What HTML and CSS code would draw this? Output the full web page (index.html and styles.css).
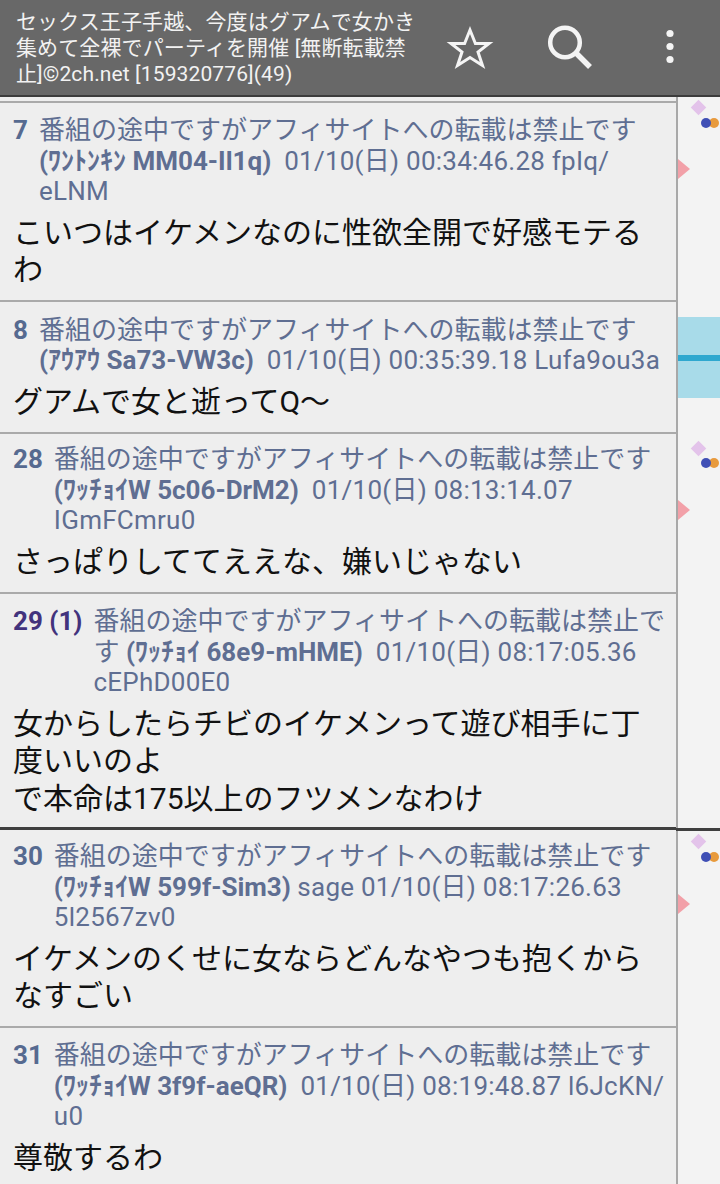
FILE: index.html
```html
<!DOCTYPE html>
<html lang="ja">
<head>
  <meta charset="UTF-8" />
  <meta name="viewport" content="width=device-width, initial-scale=1.0"/>
  <title>スレッド</title>
  <link rel="stylesheet" href="styles.css">
</head>
<body>

<header class="appbar">
  <div class="title">セックス王子手越、今度はグアムで女かき集めて全裸でパーティを開催 [無断転載禁止]©2ch.net [159320776](49)</div>
  <button class="action">
    <svg width="48" height="48" viewBox="0 0 48 48"><path d="M24 6l5.4 13.5H43L32 28l4.5 13.5L24 33.5l-12.500 8L16 28 5 19.500h13.600z" fill="none" stroke="#f4f4f4" stroke-width="3"/></svg>
  </button>
  <button class="action">
    <svg width="48" height="48" viewBox="0 0 48 48"><circle cx="19" cy="18.500" r="14.800" fill="none" stroke="#f4f4f4" stroke-width="4.500"/><path d="M30 29l14 14" stroke="#f4f4f4" stroke-width="5.500"/></svg>
  </button>
  <button class="action">
    <svg width="12" height="40" viewBox="0 0 12 40"><circle cx="6" cy="5.500" r="3.600" fill="#f4f4f4"/><circle cx="6" cy="18.500" r="3.600" fill="#f4f4f4"/><circle cx="6" cy="31.500" r="3.600" fill="#f4f4f4"/></svg>
  </button>
</header>

<div class="content">
  <main class="thread">

    <article class="post">
      <div class="head">
        <span class="num">7</span>
        <div class="meta">番組の途中ですがアフィサイトへの転載は禁止です <b>(ﾜﾝﾄﾝｷﾝ MM04-Il1q)</b>&nbsp; <span class="stamp">01/10(日) 00:34:46.28 fpIq/<wbr>eLNM</span></div>
      </div>
      <p class="body">こいつはイケメンなのに性欲全開で好感モテるわ</p>
    </article>

    <article class="post post-short">
      <div class="head">
        <span class="num">8</span>
        <div class="meta">番組の途中ですがアフィサイトへの転載は禁止です <b>(ｱｳｱｳ Sa73-VW3c)</b>&nbsp; <span class="stamp">01/10(日) 00:35:39.18 Lufa9ou3a</span></div>
      </div>
      <p class="body">グアムで女と逝ってQ〜</p>
    </article>

    <article class="post post-tight">
      <div class="head">
        <span class="num">28</span>
        <div class="meta">番組の途中ですがアフィサイトへの転載は禁止です <b>(ﾜｯﾁｮｲW 5c06-DrM2)</b>&nbsp; <span class="stamp">01/10(日) 08:13:14.07 IGmFCmru0</span></div>
      </div>
      <p class="body">さっぱりしててええな、嫌いじゃない</p>
    </article>

    <article class="post post-read">
      <div class="head">
        <span class="num num-linked">29 (1)</span>
        <div class="meta">番組の途中ですがアフィサイトへの転載は禁止です <b>(ﾜｯﾁｮｲ 68e9-mHME)</b>&nbsp; <span class="stamp">01/10(日) 08:17:05.36 cEPhD00E0</span></div>
      </div>
      <p class="body">女からしたらチビのイケメンって遊び相手に丁度いいのよ<br>で本命は175以上のフツメンなわけ</p>
    </article>

    <article class="post post-new">
      <div class="head">
        <span class="num">30</span>
        <div class="meta">番組の途中ですがアフィサイトへの転載は禁止です <b>(ﾜｯﾁｮｲW 599f-Sim3)</b> <span class="stamp">sage 01/10(日) 08:17:26.63 5l2567zv0</span></div>
      </div>
      <p class="body">イケメンのくせに女ならどんなやつも抱くからなすごい</p>
    </article>

    <article class="post">
      <div class="head">
        <span class="num">31</span>
        <div class="meta">番組の途中ですがアフィサイトへの転載は禁止です <b>(ﾜｯﾁｮｲW 3f9f-aeQR)</b>&nbsp; <span class="stamp">01/10(日) 08:19:48.87 l6JcKN/<wbr>u0</span></div>
      </div>
      <p class="body">尊敬するわ</p>
    </article>

  </main>

  <aside class="rail">
    <div class="viewport"></div>
    <div class="read-mark"></div>

    <i class="diamond" style="top: 5px"></i>
    <i class="dot blue" style="top: 21px"></i>
    <i class="dot orange" style="top: 21px"></i>
    <i class="arrow" style="top: 62px"></i>

    <i class="diamond" style="top: 346px"></i>
    <i class="dot blue" style="top: 361px"></i>
    <i class="dot orange" style="top: 361px"></i>
    <i class="arrow" style="top: 403px"></i>

    <i class="diamond" style="top: 739px"></i>
    <i class="dot blue" style="top: 755px"></i>
    <i class="dot orange" style="top: 755px"></i>
    <i class="arrow" style="top: 797px"></i>
  </aside>
</div>

</body>
</html>
```

FILE: styles.css
```css
html, body {
  margin: 0;
  height: 1184px;
  overflow: hidden;
}
body {
  font-family: Roboto, "Noto Sans CJK JP", sans-serif;
  background: #eeeeee;
}
.appbar {
  display: flex;
  align-items: center;
  height: 95px;
  background: #686868;
  border-bottom: 2px solid #3c3c3c;
}
.title {
  width: 404px;
  padding-left: 16px;
  font-size: 21px;
  line-height: 26px;
  letter-spacing: 0.12px;
  color: #f2f2f2;
}
.action {
  display: flex;
  align-items: center;
  justify-content: center;
  width: 100px;
  height: 95px;
  padding: 0;
  border: 0;
  background: none;
}
.content {
  display: flex;
  height: 1087px;
}
.thread {
  width: 676px;
  padding-top: 4px;
  border-right: 2px solid #a8a8a8;
}
.post {
  padding: 12px 10px 11px 13px;
  border-top: 2px solid #aaaaaa;
}
.post-short {
  padding-top: 13px;
  padding-bottom: 12px;
}
.post-tight {
  padding-top: 10px;
  padding-bottom: 12px;
}
.post-read {
  padding-bottom: 10px;
}
.post-new {
  padding-top: 11px;
  padding-bottom: 11.5px;
  border-top: 3px solid #3f3f3f;
}
.head {
  display: flex;
  gap: 11px;
  font-size: 26px;
  line-height: 30.5px;
  color: #5f6e92;
}
.num {
  flex: none;
  font-weight: 700;
  color: #566a90;
}
.num-linked {
  color: #42337d;
}
.meta b {
  font-weight: 700;
  white-space: nowrap;
}
.stamp {
  letter-spacing: 0.25px;
}
.body {
  margin: 7px 0 0;
  font-size: 30px;
  line-height: 37.5px;
  color: #111111;
}
.rail {
  position: relative;
  flex: 1;
  background: #f3f3f3;
}
.viewport {
  position: absolute;
  top: 220px;
  left: 0;
  right: 0;
  height: 81px;
  background: #a8dbe9;
}
.viewport::after {
  content: "";
  position: absolute;
  top: 38px;
  left: 0;
  right: 0;
  height: 6px;
  background: #2fa8cf;
}
.read-mark {
  position: absolute;
  top: 731px;
  left: -2px;
  right: 0;
  height: 3px;
  background: #3f3f3f;
}
.diamond {
  position: absolute;
  left: 15px;
  width: 11px;
  height: 11px;
  background: #e3c3ea;
  transform: rotate(45deg);
}
.dot {
  position: absolute;
  width: 10px;
  height: 10px;
  border-radius: 50%;
}
.blue {
  left: 23px;
  z-index: 1;
  background: #3f4fb5;
}
.orange {
  left: 31px;
  background: #e89a3c;
}
.arrow {
  position: absolute;
  left: 0;
  width: 0;
  height: 0;
  border-style: solid;
  border-width: 10px 0 10px 12px;
  border-color: transparent transparent transparent #f2a0a8;
}
```
